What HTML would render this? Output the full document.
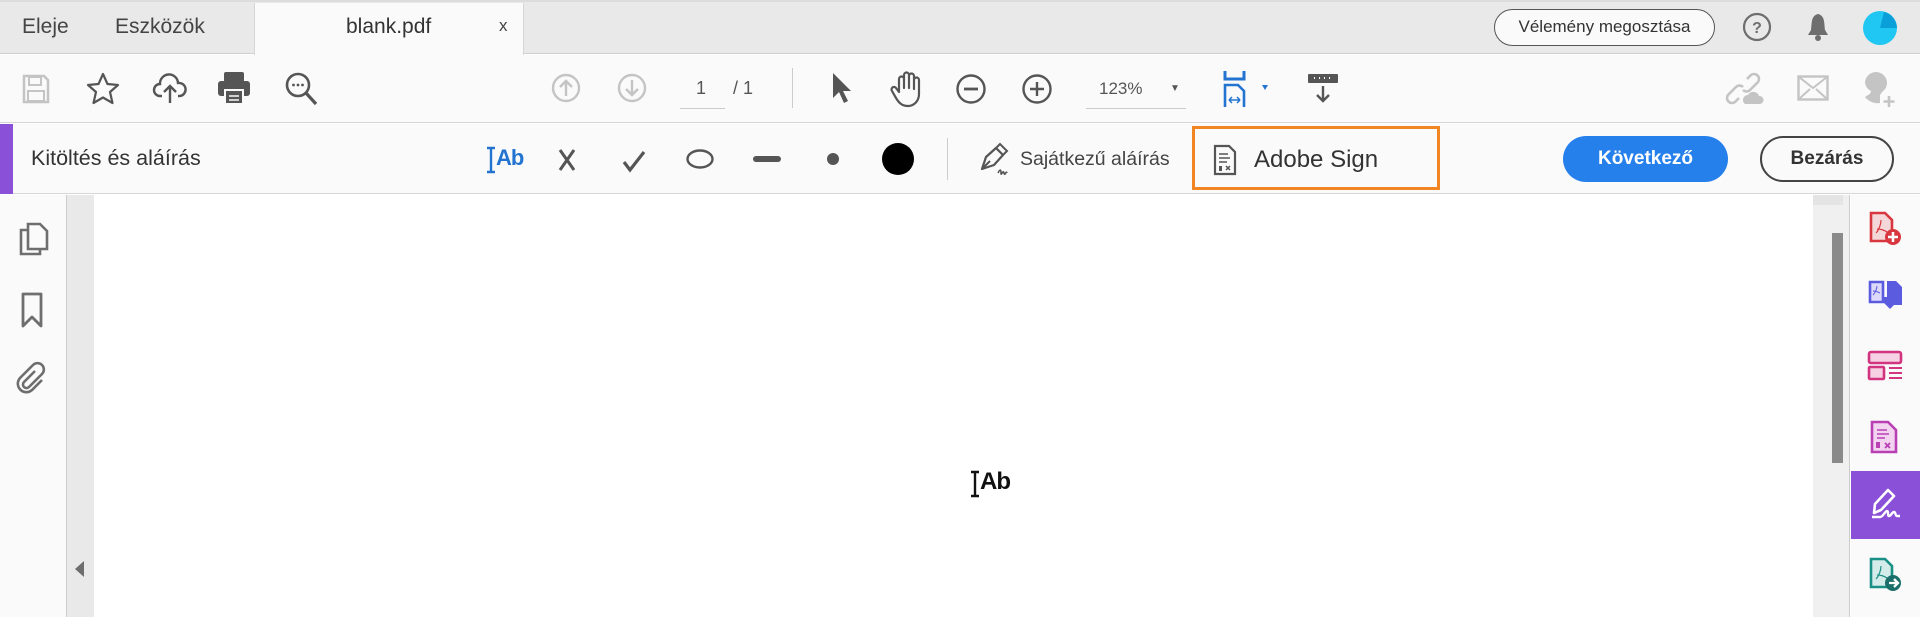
<!DOCTYPE html>
<html><head><meta charset="utf-8"><style>
*{margin:0;padding:0;box-sizing:border-box}
body{width:1920px;height:617px;overflow:hidden;background:#fff;font-family:"Liberation Sans",sans-serif;position:relative;color:#2c2c2c}
.a{position:absolute}
svg{position:absolute;overflow:visible}
</style></head><body>
<!-- tab bar -->
<div class="a" style="left:0;top:0;width:1920px;height:54px;background:#e9e9e9;border-top:2px solid #dcdcdc;border-bottom:1px solid #d0d0d0"></div>
<div class="a" style="left:254px;top:3px;width:270px;height:52px;background:#fafafa;border-left:1px solid #d6d6d6;border-right:1px solid #d6d6d6"></div>
<div class="a" style="left:22px;top:15px;font-size:21px;color:#444">Eleje</div>
<div class="a" style="left:115px;top:15px;font-size:21px;color:#444">Eszközök</div>
<div class="a" style="left:346px;top:15px;font-size:21px;color:#333">blank.pdf</div>
<div class="a" style="left:499px;top:16px;font-size:17px;color:#444">x</div>
<div class="a" style="left:1494px;top:9px;width:221px;height:37px;border:1.5px solid #555;border-radius:19px;background:#fafafa;font-size:17px;text-align:center;line-height:34px;color:#333">Vélemény megosztása</div>
<svg style="left:1742px;top:12px" width="30" height="30"><circle cx="15" cy="15" r="13" fill="none" stroke="#6e6e6e" stroke-width="2.2"/><text x="15" y="21" font-size="16" text-anchor="middle" fill="#6e6e6e" font-family="Liberation Sans" font-weight="bold">?</text></svg>
<svg style="left:1806px;top:12px" width="24" height="30"><path d="M12 2 C5 4 6 10 5 18 L2 23 L22 23 L19 18 C18 10 19 4 12 2Z" fill="#6e6e6e"/><circle cx="12" cy="26" r="3" fill="#6e6e6e"/></svg>
<svg style="left:1862px;top:10px" width="36" height="36"><circle cx="18" cy="18" r="17" fill="#1fc7f2"/><path d="M18 18 L22 2 A17 17 0 0 1 35 18Z" fill="#0a9fd8"/></svg>
<!-- toolbar -->
<div class="a" style="left:0;top:55px;width:1920px;height:68px;background:#fafafa;border-bottom:1px solid #d6d6d6"></div>
<svg style="left:22px;top:74px" width="28" height="30"><path d="M2 2h20l4 4v22H2z" fill="none" stroke="#c4c4c4" stroke-width="2.5"/><rect x="7" y="3" width="12" height="8" fill="none" stroke="#c4c4c4" stroke-width="2"/><rect x="6" y="17" width="16" height="10" fill="none" stroke="#c4c4c4" stroke-width="2"/></svg>
<svg style="left:86px;top:72px" width="34" height="34"><path d="M17 2l4.5 10 10.5 1-8 7 2.5 11L17 25.5 7.5 31 10 20 2 13l10.5-1z" fill="none" stroke="#555" stroke-width="2.2" stroke-linejoin="round"/></svg>
<svg style="left:152px;top:72px" width="36" height="34"><path d="M10 24H8a6 6 0 0 1 0-12 9 9 0 0 1 18-1 6.5 6.5 0 0 1 2 13h-2" fill="none" stroke="#555" stroke-width="2.4"/><path d="M18 31V15M12 20l6-6 6 6" fill="none" stroke="#555" stroke-width="2.4"/></svg>
<svg style="left:217px;top:71px" width="34" height="34"><rect x="7" y="1" width="20" height="10" rx="2" fill="#555"/><rect x="1" y="10" width="32" height="15" rx="3" fill="#555"/><rect x="8" y="19" width="18" height="14" fill="#555" stroke="#fafafa" stroke-width="2"/><path d="M12 25h10M12 29h10" stroke="#fafafa" stroke-width="1.5"/></svg>
<svg style="left:284px;top:71px" width="36" height="36"><circle cx="14" cy="14" r="11" fill="none" stroke="#555" stroke-width="2.6"/><path d="M22 22l10 11" stroke="#555" stroke-width="3.2"/><circle cx="9.5" cy="14" r="1.4" fill="#555"/><circle cx="14" cy="14" r="1.4" fill="#555"/><circle cx="18.5" cy="14" r="1.4" fill="#555"/></svg>
<svg style="left:551px;top:73px" width="30" height="30"><circle cx="15" cy="15" r="13" fill="none" stroke="#c4c4c4" stroke-width="2.4"/><path d="M15 23V8M9 14l6-6 6 6" fill="none" stroke="#c4c4c4" stroke-width="2.4"/></svg>
<svg style="left:617px;top:73px" width="30" height="30"><circle cx="15" cy="15" r="13" fill="none" stroke="#c4c4c4" stroke-width="2.4"/><path d="M15 7v15M9 16l6 6 6-6" fill="none" stroke="#c4c4c4" stroke-width="2.4"/></svg>
<div class="a" style="left:696px;top:78px;font-size:18px;color:#555">1</div>
<div class="a" style="left:680px;top:108px;width:45px;height:1px;background:#ccc"></div>
<div class="a" style="left:733px;top:78px;font-size:18px;color:#555">/ 1</div>
<div class="a" style="left:792px;top:68px;width:1px;height:40px;background:#ccc"></div>
<svg style="left:830px;top:71px" width="22" height="34"><path d="M3 2v25l6-6 5 11 4-2-5-10h8z" fill="#555"/></svg>
<svg style="left:890px;top:70px" width="34" height="38"><path d="M9 22V9a2.5 2.5 0 0 1 5 0v9V5a2.5 2.5 0 0 1 5 0v13V6a2.5 2.5 0 0 1 5 0v13V10a2.5 2.5 0 0 1 5 0v14c0 7-5 12-11 12s-9-3-12-8l-4-7a2.5 2.5 0 0 1 4-3z" fill="none" stroke="#555" stroke-width="2.2" stroke-linejoin="round"/></svg>
<svg style="left:955px;top:73px" width="32" height="32"><circle cx="16" cy="16" r="13.5" fill="none" stroke="#555" stroke-width="2.4"/><path d="M9 16h14" stroke="#555" stroke-width="2.8"/></svg>
<svg style="left:1021px;top:73px" width="32" height="32"><circle cx="16" cy="16" r="13.5" fill="none" stroke="#555" stroke-width="2.4"/><path d="M9 16h14M16 9v14" stroke="#555" stroke-width="2.4"/></svg>
<div class="a" style="left:1099px;top:79px;font-size:17px;color:#555">123%</div>
<div class="a" style="left:1170px;top:83px;font-size:10px;color:#555">▼</div>
<div class="a" style="left:1086px;top:108px;width:100px;height:1px;background:#ccc"></div>
<svg style="left:1222px;top:70px" width="48" height="38"><path d="M3 1v8h19V1" fill="none" stroke="#2374d0" stroke-width="3"/><path d="M3 37V15h13l6 6v16" fill="none" stroke="#2374d0" stroke-width="2.6"/><path d="M7 30h11M7 30l3-3M7 30l3 3M18 30l-3-3M18 30l-3 3" stroke="#2374d0" stroke-width="1.5"/><path d="M40 15l3 5 3-5z" fill="#2374d0"/></svg>
<svg style="left:1307px;top:72px" width="32" height="32"><rect x="1" y="2" width="30" height="9" rx="1" fill="#555"/><path d="M7 6h1M12 6h1M17 6h1M22 6h1" stroke="#fafafa" stroke-width="2"/><path d="M16 14v15M10 23l6 6 6-6" fill="none" stroke="#555" stroke-width="2.4"/></svg>
<svg style="left:1727px;top:70px" width="40" height="36"><path d="M12 28l-4 4a5 5 0 0 1-7-7l8-8a5 5 0 0 1 7 0M20 9l4-4a5 5 0 0 1 7 7l-8 8a5 5 0 0 1-7 0" fill="none" stroke="#c4c4c4" stroke-width="2.6"/><path d="M18 34a5 5 0 0 1 3-9 6 6 0 0 1 11 1 4 4 0 0 1 1 8z" fill="#c4c4c4"/></svg>
<svg style="left:1797px;top:75px" width="32" height="26"><rect x="1.5" y="1.5" width="29" height="23" fill="none" stroke="#c4c4c4" stroke-width="2.4"/><path d="M2 2l14 11 14-11M2 24l11-10M30 24l-11-10" fill="none" stroke="#c4c4c4" stroke-width="2"/></svg>
<svg style="left:1861px;top:70px" width="36" height="38"><path d="M15 2a11 11 0 0 1 11 11 11 11 0 0 1-5 9l-2 3v8c-6 1-12-2-15-6 3-2 6-3 6-6a11 11 0 0 1-6-8A11 11 0 0 1 15 2z" fill="#c4c4c4"/><path d="M28 26v11M22.5 31.5h11" stroke="#c4c4c4" stroke-width="2.6"/></svg>
<!-- fill & sign bar -->
<div class="a" style="left:0;top:124px;width:1920px;height:70px;background:#fafafa;border-bottom:1px solid #d6d6d6"></div>
<div class="a" style="left:0;top:124px;width:13px;height:70px;background:#8a50d8"></div>
<div class="a" style="left:31px;top:146px;font-size:21.5px;color:#333">Kitöltés és aláírás</div>
<svg style="left:486px;top:146px" width="10" height="28"><path d="M1 2h8M5 2v24M1 26h8" stroke="#2374d0" stroke-width="2.4"/></svg>
<div class="a" style="left:496px;top:145px;font-size:22px;color:#2374d0;font-weight:bold;letter-spacing:-1px">Ab</div>
<svg style="left:558px;top:148px" width="18" height="24"><path d="M2 2l14 20M16 2L2 22" stroke="#555" stroke-width="3"/></svg>
<svg style="left:622px;top:150px" width="24" height="22"><path d="M2 12l6 8L22 2" fill="none" stroke="#555" stroke-width="3.2"/></svg>
<svg style="left:686px;top:149px" width="28" height="20"><ellipse cx="14" cy="10" rx="12.5" ry="8.5" fill="none" stroke="#555" stroke-width="2.4"/></svg>
<div class="a" style="left:753px;top:156px;width:28px;height:6px;border-radius:3px;background:#555"></div>
<div class="a" style="left:827px;top:153px;width:12px;height:12px;border-radius:50%;background:#555"></div>
<div class="a" style="left:882px;top:143px;width:32px;height:32px;border-radius:50%;background:#000"></div>
<div class="a" style="left:947px;top:138px;width:1px;height:42px;background:#ccc"></div>
<svg style="left:978px;top:143px" width="36" height="32"><path d="M4 26l4-12 10-9 7 7-9 10z" fill="none" stroke="#555" stroke-width="2.2" stroke-linejoin="round"/><path d="M4 26l8-8M18 5l4-4 7 7-4 4" fill="none" stroke="#555" stroke-width="2"/><path d="M20 30c2-4 3-4 3 0s2-4 3 0 2-3 3 0" fill="none" stroke="#555" stroke-width="1.6"/></svg>
<div class="a" style="left:1020px;top:148px;font-size:19.5px;color:#444">Sajátkezű aláírás</div>
<div class="a" style="left:1192px;top:126px;width:248px;height:64px;border:3px solid #f28523"></div>
<svg style="left:1213px;top:144px" width="24" height="32"><path d="M2 2h14l6 6v22H2z" fill="none" stroke="#555" stroke-width="2.2"/><path d="M6 10h9M6 14h11M6 18h8" stroke="#555" stroke-width="1.6"/><rect x="6" y="22" width="3" height="5" fill="#555"/><path d="M13 22l4 4M17 22l-4 4" stroke="#555" stroke-width="1.5"/></svg>
<div class="a" style="left:1254px;top:146px;font-size:24px;color:#333">Adobe Sign</div>
<div class="a" style="left:1563px;top:136px;width:165px;height:46px;border-radius:23px;background:#2680eb;color:#fff;font-size:19px;font-weight:bold;text-align:center;line-height:46px">Következő</div>
<div class="a" style="left:1760px;top:136px;width:134px;height:46px;border-radius:23px;border:2px solid #444;color:#333;font-size:19px;font-weight:bold;text-align:center;line-height:42px">Bezárás</div>
<!-- left panel -->
<div class="a" style="left:0;top:195px;width:67px;height:422px;background:#fafafa;border-right:1px solid #ccc"></div>
<div class="a" style="left:67px;top:195px;width:27px;height:422px;background:#e9e9e9"></div>
<svg style="left:19px;top:222px" width="30" height="34"><path d="M9 8H2v24h19v-5" fill="none" stroke="#6e6e6e" stroke-width="2.6"/><path d="M9 2h12l7 7v18H9z" fill="none" stroke="#6e6e6e" stroke-width="2.6"/></svg>
<svg style="left:21px;top:292px" width="22" height="36"><path d="M2 2h18v32l-9-9-9 9z" fill="none" stroke="#6e6e6e" stroke-width="2.8" stroke-linejoin="round"/></svg>
<svg style="left:16px;top:361px" width="32" height="32"><path d="M19 10l-11 11a3.5 3.5 0 0 0 5 5l13-13a6 6 0 0 0-9-9L4 17a8.5 8.5 0 0 0 12 12l10-10" fill="none" stroke="#6e6e6e" stroke-width="2.6"/></svg>
<svg style="left:74px;top:560px" width="12" height="18"><path d="M10 1v16L1 9z" fill="#6e6e6e"/></svg>
<!-- doc cursor -->
<svg style="left:970px;top:470px" width="10" height="28"><path d="M1 2h8M5 2v24M1 26h8" stroke="#111" stroke-width="2.4"/></svg>
<div class="a" style="left:980px;top:468px;font-size:24px;color:#111;font-weight:bold;letter-spacing:-1px">Ab</div>
<!-- scrollbar -->
<div class="a" style="left:1813px;top:195px;width:37px;height:422px;background:#f0f0f0;border-right:1px solid #ccc"></div>
<div class="a" style="left:1813px;top:195px;width:30px;height:10px;background:#e4e4e4"></div>
<div class="a" style="left:1832px;top:233px;width:11px;height:230px;background:#8a8a8a"></div>
<!-- right panel -->
<div class="a" style="left:1851px;top:195px;width:69px;height:422px;background:#fafafa"></div>
<svg style="left:1868px;top:211px" width="36" height="36"><path d="M3 2h14l7 7v21H3z" fill="#f4d7d9" stroke="#d9373f" stroke-width="2.6"/><path d="M8 22c3-3 5-9 5-13M9 18c3 0 7 1 10 3" stroke="#d9373f" stroke-width="1.2" fill="none"/><circle cx="25" cy="26" r="8" fill="#d9373f"/><path d="M25 21v10M20 26h10" stroke="#fff" stroke-width="2.5"/></svg>
<svg style="left:1867px;top:279px" width="38" height="36"><path d="M3 3h13v20H3z" fill="#dcd9fa" stroke="#5b5be0" stroke-width="2.6"/><path d="M20 2h9l6 6v18H20z" fill="#5b5be0"/><path d="M16 18h4v-2l6 0v6h5l-8 8-8-8z" fill="#5b5be0"/><path d="M6 16c2-2 4-6 4-9M6 12c2 0 5 1 7 2" stroke="#5b5be0" stroke-width="1" fill="none"/></svg>
<svg style="left:1867px;top:350px" width="38" height="32"><rect x="2" y="2" width="32" height="11" rx="2" fill="#f6d0e3" stroke="#d2347f" stroke-width="2.6"/><rect x="2" y="17" width="15" height="12" rx="1" fill="#f6d0e3" stroke="#d2347f" stroke-width="2.6"/><path d="M22 18h13M22 23h13M22 28h13" stroke="#d2347f" stroke-width="2"/></svg>
<svg style="left:1870px;top:420px" width="30" height="34"><path d="M2 2h16l8 8v22H2z" fill="#f2d4f0" stroke="#b93fb4" stroke-width="2.6"/><path d="M7 10h10M7 14h12M7 18h8" stroke="#b93fb4" stroke-width="1.6"/><rect x="6" y="22" width="4" height="6" fill="#b93fb4"/><path d="M15 23l5 5M20 23l-5 5" stroke="#b93fb4" stroke-width="1.8"/></svg>
<div class="a" style="left:1851px;top:471px;width:69px;height:68px;background:#8a50d8"></div>
<svg style="left:1868px;top:487px" width="36" height="34"><path d="M6 26L7 17 20 3l6 6-13 14z" fill="none" stroke="#fff" stroke-width="2.6" stroke-linejoin="round"/><path d="M4 30h8c3 0 5-6 7-6s0 5 2 5 3-4 5-4 1 4 3 4h3" fill="none" stroke="#fff" stroke-width="2.4"/></svg>
<svg style="left:1868px;top:557px" width="36" height="36"><path d="M3 2h14l7 7v21H3z" fill="#d3ecea" stroke="#1a8f85" stroke-width="2.6"/><path d="M8 22c3-3 5-9 5-13M9 18c3 0 7 1 10 3" stroke="#1a8f85" stroke-width="1.2" fill="none"/><circle cx="25" cy="26" r="8" fill="#1a6f6a"/><path d="M21 26h8M26 22l4 4-4 4" stroke="#fff" stroke-width="2.3" fill="none"/></svg>
</body></html>
